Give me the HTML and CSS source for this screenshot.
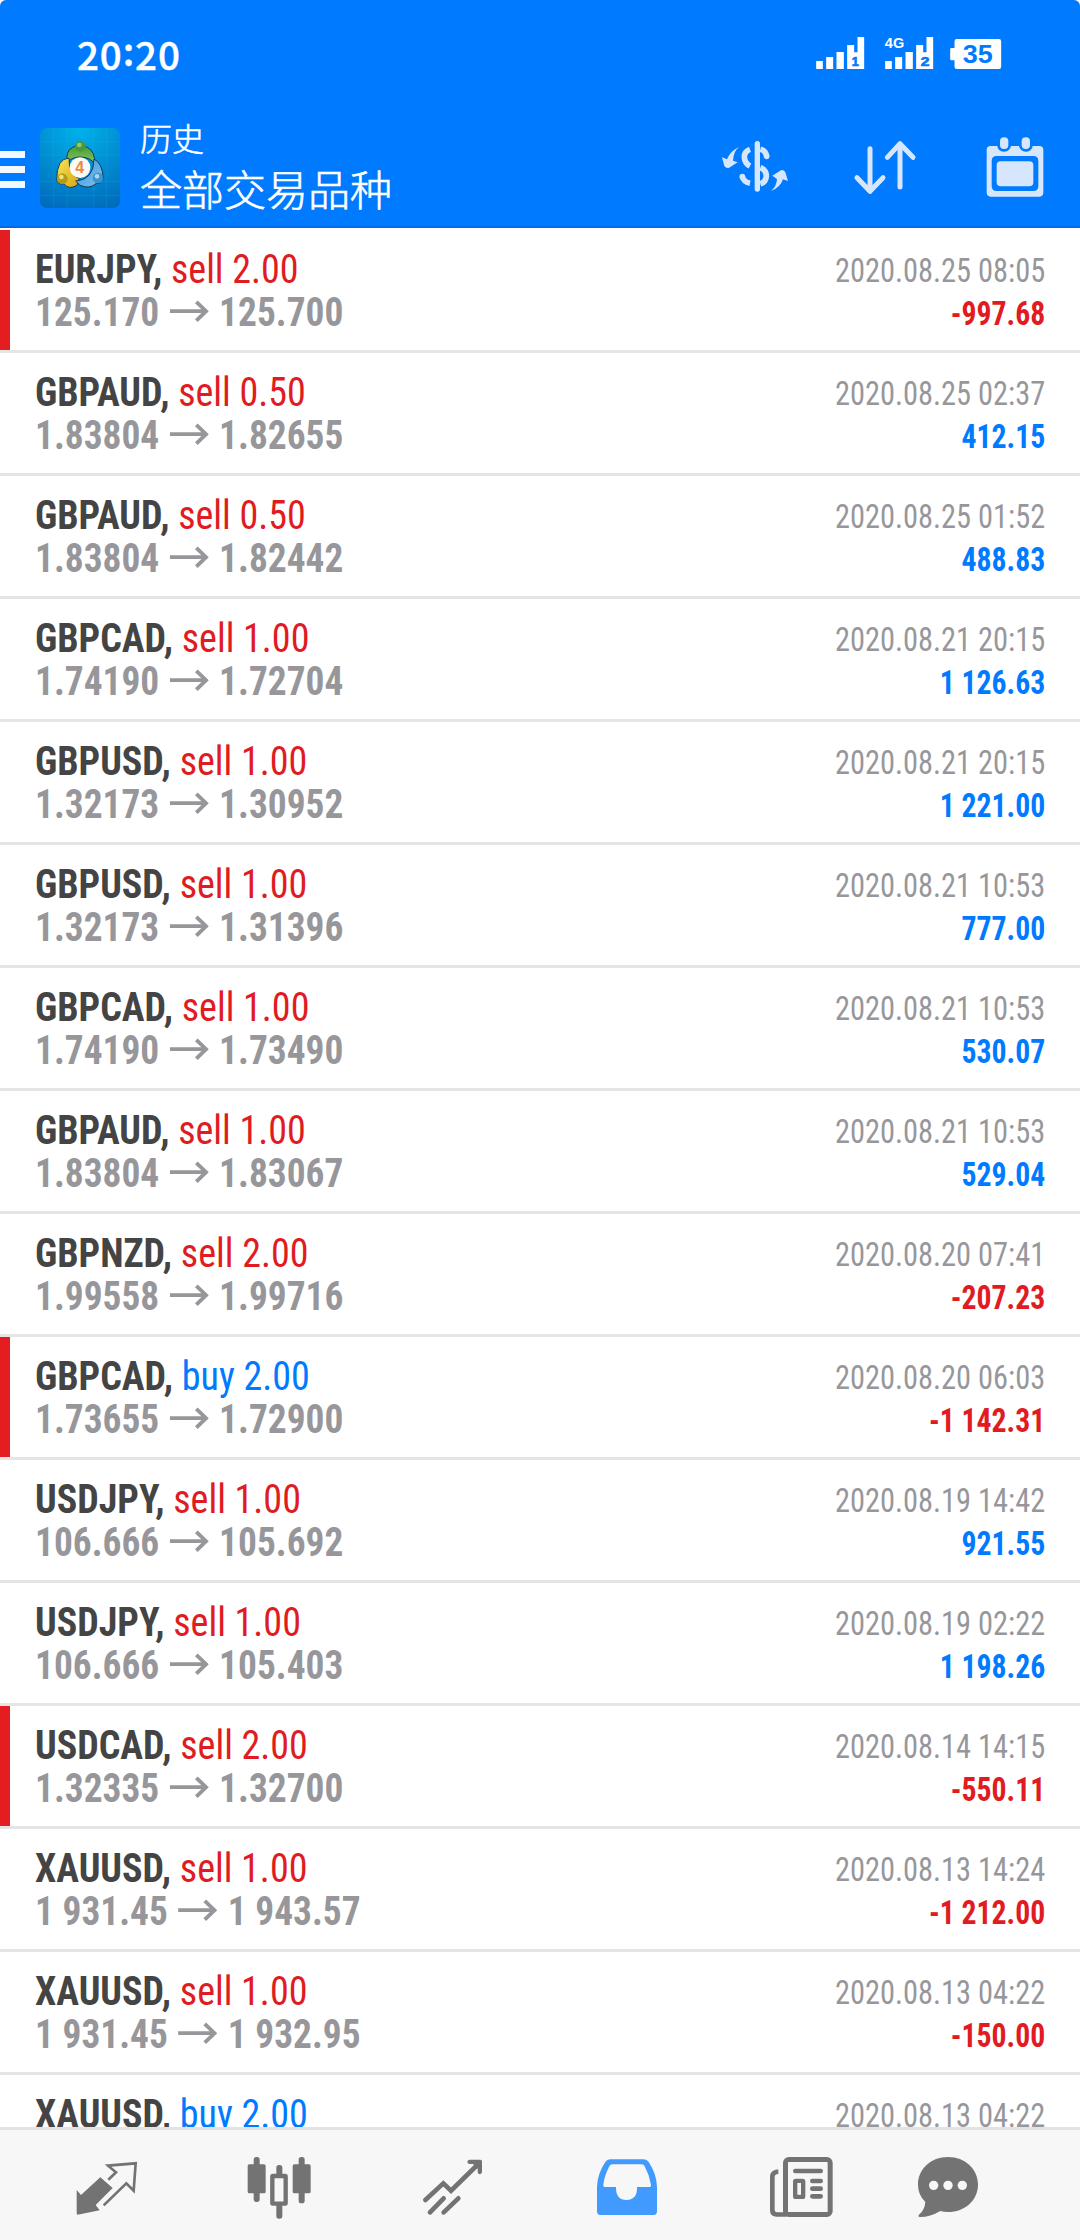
FILE: index.html
```html
<!DOCTYPE html>
<html lang="zh-CN">
<head>
<meta charset="utf-8">
<title>历史</title>
<link rel="stylesheet" href="styles.css">
</head>
<body>
<svg width="0" height="0" class="defs">
  <symbol id="arrow" viewBox="0 0 39 22" preserveAspectRatio="none"><path d="M0 11.2H36M26.5 1.8L36.2 11.2L26.5 20.6" fill="none" stroke="currentColor" stroke-width="3.8"/></symbol>
</svg>
<div class="screen">
  <header class="top">
    <div class="status">
      <div class="clock">20<span class="colon">:</span>20</div>
      <svg class="signals" viewBox="105 105 560 105" width="187" height="35">
        <g fill="#fff">
          <path d="M108 183h20v24h-20zM138 171h21v36h-21zM169 156h22v51h-22zM201 135h21v22h10v-46h20v96h-51z"/>
          <path d="M315 183h20v24h-20zM345 171h21v36h-21zM376 156h22v51h-22zM408 135h21v22h10v-46h20v96h-51z"/>
          <path d="M530 117h126q7 0 7 7v76q0 7-7 7H530q-7 0-7-7v-19h-9q-4 0-4-4v-29q0-4 4-4h9v-20q0-7 7-7z"/>
          <text x="314" y="144" class="net" textLength="58" lengthAdjust="spacingAndGlyphs">4G</text>
        </g>
        <g fill="#007aff">
          <text x="215" y="198" class="sim" textLength="21" lengthAdjust="spacingAndGlyphs">1</text>
          <text x="422" y="198" class="sim" textLength="26" lengthAdjust="spacingAndGlyphs">2</text>
          <text x="548" y="190" class="batt" textLength="90" lengthAdjust="spacingAndGlyphs">35</text>
        </g>
      </svg>
    </div>
    <div class="bar">
      <svg class="menu" width="25" height="38" viewBox="0 0 25 38"><path d="M0 1h25v7H0zM0 16h25v7H0zM0 31h25v7H0z" fill="#f2f8ff"/></svg>
      <svg class="logo" width="80" height="80" viewBox="30 24 240 240">
        <defs>
          <radialGradient id="bg" cx=".5" cy="0" r="1.05"><stop offset="0" stop-color="#00b2ea"/><stop offset=".5" stop-color="#0090d4"/><stop offset="1" stop-color="#006cbc"/></radialGradient>
          <linearGradient id="gr" x1="0" y1="0" x2="0" y2="1"><stop offset="0" stop-color="#3f9a3c"/><stop offset="1" stop-color="#8fc95a"/></linearGradient>
          <linearGradient id="ye" x1="0" y1="0" x2="1" y2="1"><stop offset="0" stop-color="#f6e65c"/><stop offset="1" stop-color="#d9a510"/></linearGradient>
          <linearGradient id="bl" x1="0" y1="0" x2="1" y2="1"><stop offset="0" stop-color="#3f8fd4"/><stop offset="1" stop-color="#7cc6f2"/></linearGradient>
        </defs>
        <rect x="30" y="24" width="240" height="240" rx="20" fill="url(#bg)"/>
        <path d="M70 24v240M111 24v240M190 24v240M230 24v240M30 65h240M30 105h240M30 184h240M30 226h240" stroke="#38b7e5" stroke-width="1.5" opacity=".35"/>
        <g stroke="#12395a" stroke-width="3">
          <path d="M112 128Q105 94 128 82Q150 69 172 82Q196 94 194 133Q184 112 150 111Q123 112 112 128Z" fill="url(#gr)"/>
          <path d="M117 114Q80 115 80 180Q84 195 102 191Q116 211 141 196L148 176Q116 165 117 114Z" fill="url(#ye)"/>
          <path d="M192 117Q216 128 220 174Q216 193 199 190Q178 209 150 196L137 183Q191 180 192 117Z" fill="url(#bl)"/>
        </g>
        <circle cx="151" cy="79" r="16" fill="#4a983a"/><circle cx="148" cy="75" r="7" fill="#95c978"/>
        <circle cx="97" cy="176" r="16" fill="#b79b18"/><circle cx="94" cy="171" r="7" fill="#eee47c"/>
        <circle cx="204" cy="174" r="16" fill="#3c91cf"/><circle cx="201" cy="169" r="7" fill="#a3d8f4"/>
        <circle cx="150" cy="143" r="31" fill="#fbfaf6"/>
        <text x="149" y="160" class="four" text-anchor="middle">4</text>
      </svg>
      <div class="titles">
        <div class="sub">历史</div>
        <div class="main">全部交易品种</div>
      </div>
      <div class="actions">
        <svg width="70" height="65" viewBox="60 75 210 195" fill="#d6e6fc">
          <path d="M172 101V237" stroke="#d6e6fc" stroke-width="16" stroke-linecap="round"/>
          <path d="M150 118Q133 124 133 141Q134 160 150 168M181 118Q197 122 200 138M127 200Q131 216 150 220M181 173Q199 180 199 199Q197 217 181 221" fill="none" stroke="#d6e6fc" stroke-width="17"/>
          <circle cx="200" cy="139" r="8.500"/><circle cx="127" cy="200" r="8.500"/>
          <path d="M118 111Q101 121 99 152L113 157L85 175Q76 173 73 168L66 142L81 148Q91 122 118 111Z"/>
          <path d="M213 243Q230 229 231 207L217 197L244 180Q253 180 256 187L264 213L249 208Q241 233 213 243Z"/>
        </svg>
        <svg width="70" height="65" viewBox="450 75 210 195" fill="none" stroke="#d6e6fc" stroke-width="15" stroke-linecap="round" stroke-linejoin="round">
          <path d="M510 116V242M471 203L510 244L549 203M600 231V103M562 142L600 101L639 142"/>
        </svg>
        <svg width="70" height="65" viewBox="840 75 210 195" fill="#d6e6fc">
          <path fill-rule="evenodd" d="M872 108H892Q893 124 912 125Q930 124 933 108H957Q960 124 978 125Q996 124 998 108H1018Q1030 108 1030 120V247Q1030 260 1018 260H872Q860 260 860 247V120Q860 108 872 108ZM890 138Q875 138 875 153V229Q875 243 890 243H1000Q1015 243 1015 229V153Q1015 138 1000 138Z"/>
          <rect x="890" y="154" width="110" height="75" rx="12"/>
          <rect x="900" y="82" width="25" height="35" rx="12"/><rect x="965" y="82" width="25" height="35" rx="12"/>
        </svg>
      </div>
    </div>
  </header>

  <main class="list">
    <div class="row hit"><div class="deal"><p class="sym">EURJPY, <span class="sell">sell 2.00</span></p><p class="price">125.170<svg class="arw"><use href="#arrow"/></svg>125.700</p></div><div class="res"><p class="date">2020.08.25 08:05</p><p class="pl neg">-997.68</p></div></div>
    <div class="row"><div class="deal"><p class="sym">GBPAUD, <span class="sell">sell 0.50</span></p><p class="price">1.83804<svg class="arw"><use href="#arrow"/></svg>1.82655</p></div><div class="res"><p class="date">2020.08.25 02:37</p><p class="pl">412.15</p></div></div>
    <div class="row"><div class="deal"><p class="sym">GBPAUD, <span class="sell">sell 0.50</span></p><p class="price">1.83804<svg class="arw"><use href="#arrow"/></svg>1.82442</p></div><div class="res"><p class="date">2020.08.25 01:52</p><p class="pl">488.83</p></div></div>
    <div class="row"><div class="deal"><p class="sym">GBPCAD, <span class="sell">sell 1.00</span></p><p class="price">1.74190<svg class="arw"><use href="#arrow"/></svg>1.72704</p></div><div class="res"><p class="date">2020.08.21 20:15</p><p class="pl">1 126.63</p></div></div>
    <div class="row"><div class="deal"><p class="sym">GBPUSD, <span class="sell">sell 1.00</span></p><p class="price">1.32173<svg class="arw"><use href="#arrow"/></svg>1.30952</p></div><div class="res"><p class="date">2020.08.21 20:15</p><p class="pl">1 221.00</p></div></div>
    <div class="row"><div class="deal"><p class="sym">GBPUSD, <span class="sell">sell 1.00</span></p><p class="price">1.32173<svg class="arw"><use href="#arrow"/></svg>1.31396</p></div><div class="res"><p class="date">2020.08.21 10:53</p><p class="pl">777.00</p></div></div>
    <div class="row"><div class="deal"><p class="sym">GBPCAD, <span class="sell">sell 1.00</span></p><p class="price">1.74190<svg class="arw"><use href="#arrow"/></svg>1.73490</p></div><div class="res"><p class="date">2020.08.21 10:53</p><p class="pl">530.07</p></div></div>
    <div class="row"><div class="deal"><p class="sym">GBPAUD, <span class="sell">sell 1.00</span></p><p class="price">1.83804<svg class="arw"><use href="#arrow"/></svg>1.83067</p></div><div class="res"><p class="date">2020.08.21 10:53</p><p class="pl">529.04</p></div></div>
    <div class="row"><div class="deal"><p class="sym">GBPNZD, <span class="sell">sell 2.00</span></p><p class="price">1.99558<svg class="arw"><use href="#arrow"/></svg>1.99716</p></div><div class="res"><p class="date">2020.08.20 07:41</p><p class="pl neg">-207.23</p></div></div>
    <div class="row hit"><div class="deal"><p class="sym">GBPCAD, <span class="buy">buy 2.00</span></p><p class="price">1.73655<svg class="arw"><use href="#arrow"/></svg>1.72900</p></div><div class="res"><p class="date">2020.08.20 06:03</p><p class="pl neg">-1 142.31</p></div></div>
    <div class="row"><div class="deal"><p class="sym">USDJPY, <span class="sell">sell 1.00</span></p><p class="price">106.666<svg class="arw"><use href="#arrow"/></svg>105.692</p></div><div class="res"><p class="date">2020.08.19 14:42</p><p class="pl">921.55</p></div></div>
    <div class="row"><div class="deal"><p class="sym">USDJPY, <span class="sell">sell 1.00</span></p><p class="price">106.666<svg class="arw"><use href="#arrow"/></svg>105.403</p></div><div class="res"><p class="date">2020.08.19 02:22</p><p class="pl">1 198.26</p></div></div>
    <div class="row hit"><div class="deal"><p class="sym">USDCAD, <span class="sell">sell 2.00</span></p><p class="price">1.32335<svg class="arw"><use href="#arrow"/></svg>1.32700</p></div><div class="res"><p class="date">2020.08.14 14:15</p><p class="pl neg">-550.11</p></div></div>
    <div class="row"><div class="deal"><p class="sym">XAUUSD, <span class="sell">sell 1.00</span></p><p class="price">1 931.45<svg class="arw"><use href="#arrow"/></svg>1 943.57</p></div><div class="res"><p class="date">2020.08.13 14:24</p><p class="pl neg">-1 212.00</p></div></div>
    <div class="row"><div class="deal"><p class="sym">XAUUSD, <span class="sell">sell 1.00</span></p><p class="price">1 931.45<svg class="arw"><use href="#arrow"/></svg>1 932.95</p></div><div class="res"><p class="date">2020.08.13 04:22</p><p class="pl neg">-150.00</p></div></div>
    <div class="row"><div class="deal"><p class="sym">XAUUSD, <span class="buy">buy 2.00</span></p></div><div class="res"><p class="date">2020.08.13 04:22</p></div></div>
  </main>

  <nav class="tabs">
    <svg width="70" height="70" viewBox="210 210 210 210">
      <path d="M301 292L338 324L287 375L299 391L233 404Q230 404 230 400V330L243 345Z" fill="#737373"/>
      <path d="M325 299L348 277L324 257L407 250L401 332L379 310L311 376" fill="none" stroke="#737373" stroke-width="8"/>
    </svg>
    <svg width="70" height="70" viewBox="732 210 210 210" fill="#737373">
      <rect x="743" y="253" width="54" height="87" rx="5"/><rect x="761" y="231" width="18" height="135" rx="8"/>
      <rect x="878" y="253" width="54" height="87" rx="5"/><rect x="896" y="231" width="18" height="139" rx="8"/>
      <rect x="829" y="255" width="18" height="40" rx="8"/><rect x="829" y="360" width="18" height="56" rx="8"/>
      <rect x="817" y="288" width="40" height="83" rx="2" fill="#f7f7f7" stroke="#737373" stroke-width="13"/>
    </svg>
    <svg width="70" height="70" viewBox="174 210 210 210" fill="none" stroke="#737373" stroke-width="14" stroke-linecap="round">
      <path d="M196 360L250 310L273 332L355 252"/><path d="M210 397L251 355M251 397L295 355"/>
      <path d="M328 239H361Q366 239 366 244V277Q364 283 359 283Q353 281 353 276V266L339 252H328Q322 250 322 245Q323 240 328 239Z" fill="#737373" stroke="none"/>
    </svg>
    <svg width="70" height="70" viewBox="696 210 210 210">
      <path fill="#419bff" fill-rule="evenodd" d="M750 238H851Q861 238 866 246Q890 282 891 320V394Q891 405 881 405H721Q711 405 711 394V320Q712 282 736 246Q741 238 750 238ZM757 253Q751 253 748 259Q733 288 730 314Q729 321 736 321H768Q767 360 800 360Q833 358 831 321H866Q874 321 873 314Q868 285 854 259Q851 253 845 253Z"/>
    </svg>
    <svg width="70" height="70" viewBox="138 210 210 210" fill="none" stroke="#737373" stroke-width="15">
      <rect x="196.500" y="238.500" width="134" height="165" rx="10"/>
      <path d="M200 403.500H170Q157 403.500 157 391V291Q157 276 175 275" stroke-width="14"/>
      <path d="M226 273H302M277 303H302M277 326H302M277 349H302" stroke-linecap="round" stroke-width="14"/>
      <rect x="225.500" y="302.500" width="24" height="48" rx="2" stroke-width="13"/>
    </svg>
    <svg width="70" height="70" viewBox="579 210 210 210">
      <path d="M684 231C735 231 774 267 774 314C774 360 735 396 684 396Q672 396 661 393Q631 411 600 411Q592 410 597 404Q614 391 616 366Q594 344 594 314C594 267 633 231 684 231Z" fill="#737373"/>
      <circle cx="641" cy="316" r="14" fill="#f7f7f7"/><circle cx="684" cy="316" r="14" fill="#f7f7f7"/><circle cx="727" cy="316" r="14" fill="#f7f7f7"/>
    </svg>
  </nav>
</div>
</body>
</html>
```
FILE: styles.css
```css
* { box-sizing: border-box; }
body { margin: 0; background: #fff; }
p { margin: 0; }
svg { display: block; flex: none; }
.defs { display: none; }

.screen {
  width: 1080px;
  height: 2240px;
  display: flex;
  flex-direction: column;
  overflow: hidden;
  font-family: "Roboto Condensed", Roboto, sans-serif;
  font-stretch: 75%;
}

.top {
  flex: none;
  height: 228px;
  background: #007aff;
  border-bottom: 2px solid #006ae6;
  border-radius: 6px 6px 0 0;
  color: #fff;
  font-family: "Noto Sans CJK SC", sans-serif;
  font-stretch: normal;
}
.status {
  height: 110px;
  padding: 0 78px 0 77px;
  display: flex;
  justify-content: space-between;
  align-items: flex-start;
}
.clock { font-size: 38.5px; font-weight: 500; line-height: 56px; padding-top: 25px; letter-spacing: .9px; -webkit-text-stroke: .4px #fff; }
.colon { position: relative; top: -4px; }
.signals { margin-top: 35px; }
.net { font: bold 43px "Liberation Sans", sans-serif; }
.sim { font: bold 36px "Liberation Sans", sans-serif; stroke: #007aff; stroke-width: 2px; }
.batt { font: bold 76px "Liberation Sans", sans-serif; }
.four { font: bold 48px "Liberation Sans", sans-serif; fill: #ee8a3c; }

.bar { display: flex; align-items: flex-start; padding-right: 30px; }
.menu { margin-top: 40px; }
.logo { margin: 18px 0 0 15px; }
.titles { margin: 5px 0 0 20px; font-weight: 300; white-space: nowrap; -webkit-text-stroke: .6px #fff; }
.sub { font-size: 32px; line-height: 44px; }
.main { font-size: 42px; line-height: 58px; }
.actions { margin: 25px 0 0 auto; display: flex; gap: 60px; }

.list { flex: 1; min-height: 0; overflow: hidden; padding-top: 2px; }
.row {
  height: 123px;
  padding: 18px 35px 0;
  border-bottom: 3px solid #e5e5e5;
  display: flex;
  justify-content: space-between;
  white-space: nowrap;
}
.hit { background: linear-gradient(#e41e20, #e41e20) 0 0 / 10px 120px no-repeat; }
.sym, .price { font-size: 40px; line-height: 43px; font-weight: 700; transform-origin: 0 50%; }
.sym { color: #444; transform: scaleX(.95); }
.sym span { font-weight: 400; }
.price { display: flex; align-items: flex-start; color: #97979b; transform: scaleX(.935); }
.arw { width: 42px; height: 22px; margin: 9px 11px 0 11px; }
.sell { color: #e01b22; }
.buy { color: #007aff; }
.res { text-align: right; font-size: 33px; line-height: 43px; padding-top: 1px; }
.date, .pl { transform-origin: 100% 50%; }
.date { color: #97979b; transform: scaleX(.921); }
.pl { font-weight: 700; color: #007aff; transform: scaleX(.9); }
.neg { color: #e01b22; }

.tabs {
  flex: none;
  height: 113px;
  padding: 20px 0 0 18px;
  border-top: 3px solid #e3e3e3;
  background: #f7f7f7;
  display: grid;
  grid-template-columns: repeat(5, 174px) 120px;
  justify-items: center;
  align-items: start;
}
```
